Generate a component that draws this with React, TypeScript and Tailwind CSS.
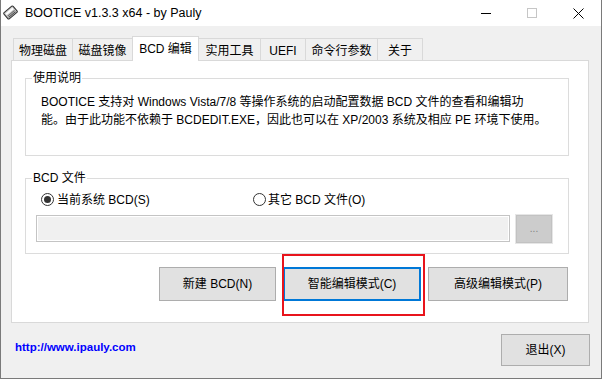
import React from 'react';

const tabs = [
  { label: '物理磁盘', w: 'w-[59px] border-l' },
  { label: '磁盘镜像', w: 'w-[60px] border-l' },
  { label: 'BCD 编辑', w: 'w-[67px]', active: true },
  { label: '实用工具', w: 'w-[61px]' },
  { label: 'UEFI', w: 'w-[45px] border-l' },
  { label: '命令行参数', w: 'w-[72px] border-l' },
  { label: '关于', w: 'w-[46px] border-x' },
];

const AppIcon: React.FC = () => (
  <svg width="15" height="15" viewBox="0 0 15 15">
    <g transform="rotate(-40 7.5 7.5)">
      <rect x="1.5" y="3.5" width="12" height="8" rx="1" fill="#cfcfcf" stroke="#2f2f2f" />
      <rect x="3" y="5" width="9" height="2" fill="#ffffff" />
      <line x1="3" y1="8.5" x2="12" y2="8.5" stroke="#6a6a6a" />
      <line x1="3" y1="10" x2="12" y2="10" stroke="#4a4a4a" />
    </g>
  </svg>
);

const Radio: React.FC<{ checked?: boolean }> = ({ checked }) => (
  <span className="w-[13px] h-[13px] rounded-full border border-[#333333] bg-white flex items-center justify-center shrink-0">
    {checked && <span className="w-[7px] h-[7px] rounded-full bg-[#333333]" />}
  </span>
);

const App: React.FC = () => {
  return (
    <div className="w-[602px] h-[379px] flex flex-col bg-[#f0f0f0] border-x border-b border-[#7a7a7a] overflow-hidden text-[12px] text-black font-[family-name:'Liberation_Sans','Noto_Sans_CJK_SC',sans-serif]">
      {/* Title bar */}
      <div className="h-[26px] shrink-0 bg-white flex items-center">
        <div className="ml-[2px] mt-[-1px]">
          <AppIcon />
        </div>
        <span className="ml-[7px] text-[12.5px] leading-[16px]">BOOTICE v1.3.3 x64 - by Pauly</span>
        <div className="ml-auto flex h-full">
          <div className="w-[46px] flex items-center justify-center">
            <span className="w-[10px] h-px bg-black" />
          </div>
          <div className="w-[46px] flex items-center justify-center">
            <span className="w-[10px] h-[10px] border border-[#c6c6c6]" />
          </div>
          <div className="w-[46px] flex items-center justify-center">
            <svg width="11" height="11" viewBox="0 0 11 11">
              <path d="M0.5 0.5 L10.5 10.5 M10.5 0.5 L0.5 10.5" stroke="#000" strokeWidth="1" />
            </svg>
          </div>
        </div>
      </div>

      {/* Tabs */}
      <div className="h-[34px] shrink-0 flex items-end pl-[12px]">
        {tabs.map((t) =>
          t.active ? (
            <div
              key={t.label}
              className={`${t.w} h-[25px] -mb-px relative z-10 bg-white border-x border-t border-[#d9d9d9] flex items-center justify-center leading-[16px]`}
            >
              {t.label}
            </div>
          ) : (
            <div
              key={t.label}
              className={`${t.w} h-[22px] bg-[#f0f0f0] border-t border-[#d9d9d9] flex items-center justify-center pt-[2px] leading-[16px]`}
            >
              {t.label}
            </div>
          )
        )}
      </div>

      {/* Tab panel */}
      <div className="ml-[10px] w-[578px] h-[263px] shrink-0 bg-white border border-[#d9d9d9] flex flex-col">
        <fieldset className="mt-[9px] ml-[13px] w-[544px] h-[86px] border border-[#dcdcdc]">
          <legend className="ml-[6px] px-[1px] leading-[16px]">使用说明</legend>
          <p className="mt-[7px] ml-[15px] leading-[18px] whitespace-nowrap">
            BOOTICE 支持对 Windows Vista/7/8 等操作系统的启动配置数据 BCD 文件的查看和编辑功
            <br />
            能。由于此功能不依赖于 BCDEDIT.EXE，因此也可以在 XP/2003 系统及相应 PE 环境下使用。
          </p>
        </fieldset>

        <fieldset className="mt-[14px] ml-[13px] w-[544px] h-[84px] border border-[#dcdcdc]">
          <legend className="ml-[6px] px-[1px] leading-[16px]">BCD 文件</legend>
          <div className="mt-[5px] h-[17px] pl-[15px] flex items-center">
            <label className="w-[212px] flex items-center gap-[3px] leading-[16px]">
              <Radio checked />
              <span>当前系统 BCD(S)</span>
            </label>
            <label className="flex items-center gap-[2px] leading-[16px]">
              <Radio />
              <span>其它 BCD 文件(O)</span>
            </label>
          </div>
          <div className="mt-[6px] pl-[10px] flex items-start gap-[5px]">
            <div className="mt-[1px] w-[474px] h-[27px] bg-[#f0f0f0] border border-[#c4c4c4] shadow-[inset_0_0_0_1px_#ffffff]" />
            <div className="w-[38px] h-[30px] bg-[#cccccc] border border-[#e6e6e6] shadow-[inset_0_0_0_1px_#c2c2c2] flex items-center justify-center text-[#838383] text-[10px] leading-[10px]">
              ...
            </div>
          </div>
        </fieldset>

        <div className="mt-[13px] pr-[20px] flex justify-end gap-[7px]">
          <button className="w-[117px] h-[34px] bg-[#e1e1e1] border border-[#adadad] leading-[16px]">
            新建 BCD(N)
          </button>
          <div className="relative">
            <button className="w-[138px] h-[34px] bg-[#e1e1e1] border-2 border-[#0078d7] leading-[16px]">
              智能编辑模式(C)
            </button>
            <span className="absolute left-[-1px] right-[-4px] top-[-13px] bottom-[-15px] border-2 border-[#e8141c] pointer-events-none" />
          </div>
          <button className="w-[140px] h-[34px] bg-[#e1e1e1] border border-[#adadad] leading-[16px]">
            高级编辑模式(P)
          </button>
        </div>
      </div>

      {/* Footer */}
      <div className="flex items-start justify-between">
        <a className="ml-[14px] mt-[17px] text-[11.5px] font-bold leading-[14px] text-[#0000ff]">
          http://www.ipauly.com
        </a>
        <button className="mt-[11px] mr-[11px] w-[89px] h-[32px] bg-[#e1e1e1] border border-[#adadad] leading-[16px]">
          退出(X)
        </button>
      </div>
    </div>
  );
};

export default App;
